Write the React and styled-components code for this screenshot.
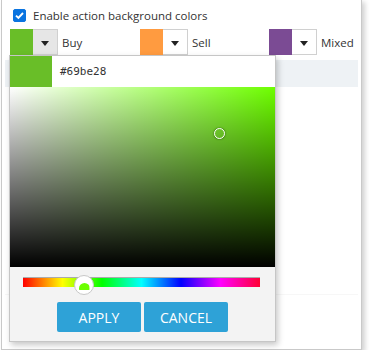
import React, { useState } from 'react';
import styled, { createGlobalStyle } from 'styled-components';

const pickers = [
  { label: 'Buy', color: '#69be28', active: true },
  { label: 'Sell', color: '#ff9b40' },
  { label: 'Mixed', color: '#7b4b94' },
];

const App = () => {
  const [enabled, setEnabled] = useState(true);

  return (
    <>
      <GlobalStyle />
      <Panel>
        <CheckRow onClick={() => setEnabled(!enabled)}>
          <CheckBox checked={enabled}>
            {enabled && (
              <svg width="11" height="11" viewBox="0 0 11 11">
                <path d="M2 5.6 L4.4 8 L9 3" fill="none" stroke="#fff" strokeWidth="1.9" />
              </svg>
            )}
          </CheckBox>
          Enable action background colors
        </CheckRow>

        <PickerRow>
          {pickers.map((p) => (
            <PickerCell key={p.label}>
              <Picker>
                <Swatch color={p.color} />
                <ArrowButton active={p.active}>
                  <Arrow />
                </ArrowButton>
              </Picker>
              <Label>{p.label}</Label>
            </PickerCell>
          ))}
        </PickerRow>

        <Band />
        <Body />

        <Popup>
          <PopupHeader>
            <BigSwatch color="#69be28" />
            <HexValue>#69be28</HexValue>
          </PopupHeader>
          <Gradient>
            <GradHandle style={{ left: 209, top: 46 }} />
          </Gradient>
          <SliderWrap>
            <HueTrack>
              <HueHandle style={{ left: 61 }}>
                <HueDot />
              </HueHandle>
            </HueTrack>
          </SliderWrap>
          <Buttons>
            <Button>APPLY</Button>
            <Button>CANCEL</Button>
          </Buttons>
        </Popup>
      </Panel>
    </>
  );
};

const GlobalStyle = createGlobalStyle`
  body {
    margin: 0;
    background: #ffffff;
    font-family: "Segoe UI", "Open Sans", "Noto Sans", sans-serif;
    color: #333;
  }
`;

const Panel = styled.div`
  position: relative;
  box-sizing: border-box;
  margin: -1px 0 0 1px;
  width: 361px;
  height: 351px;
  border: 1px solid #c9c9c9;
  background: #fff;
  box-shadow: 3px 3px 5px rgba(0, 0, 0, 0.18);
`;

const CheckRow = styled.div`
  display: flex;
  align-items: center;
  gap: 7px;
  height: 14px;
  padding: 8px 0 0 11px;
  font-size: 11.5px;
  color: #333;
  cursor: pointer;
`;

const CheckBox = styled.span`
  display: flex;
  align-items: center;
  justify-content: center;
  box-sizing: border-box;
  width: 13px;
  height: 13px;
  border-radius: 2px;
  background: ${(p) => (p.checked ? '#0a74e0' : '#fff')};
  border: 1px solid ${(p) => (p.checked ? '#0a74e0' : '#777')};
`;

const PickerRow = styled.div`
  display: grid;
  grid-template-columns: 130px 129px 1fr;
  padding: 7px 0 0 8px;
`;

const PickerCell = styled.div`
  display: flex;
  align-items: center;
  gap: 4px;
`;

const Picker = styled.div`
  display: flex;
  box-sizing: border-box;
  height: 26px;
  border: 1px solid #d0d0d0;
`;

const Swatch = styled.div`
  width: 23px;
  margin: -1px 0 -1px -1px;
  background: ${(p) => p.color};
`;

const ArrowButton = styled.div`
  display: flex;
  align-items: center;
  justify-content: center;
  width: 24px;
  background: ${(p) => (p.active ? '#e6e6e6' : '#fff')};
`;

const Arrow = styled.span`
  margin-top: 3px;
  width: 0;
  height: 0;
  border-left: 4px solid transparent;
  border-right: 4px solid transparent;
  border-top: 5px solid #222;
`;

const Label = styled.span`
  font-size: 11.5px;
  color: #333;
`;

const Band = styled.div`
  height: 27px;
  margin: 5px 3px 0 3px;
  background: #eef2f5;
`;

const Body = styled.div`
  height: 207px;
  margin: 0 3px;
  border-bottom: 1px solid #f7f7f7;
`;

const Popup = styled.div`
  position: absolute;
  left: 7px;
  top: 55px;
  box-sizing: border-box;
  width: 267px;
  height: 287px;
  border: 1px solid #c6c6c6;
  background: #f3f3f3;
  box-shadow: 2px 3px 6px rgba(0, 0, 0, 0.22);
  display: flex;
  flex-direction: column;
`;

const PopupHeader = styled.div`
  display: flex;
  align-items: center;
  height: 31px;
  background: #fff;
`;

const BigSwatch = styled.div`
  align-self: stretch;
  width: 42px;
  background: ${(p) => p.color};
`;

const HexValue = styled.span`
  margin-left: 8px;
  font-family: "DejaVu Sans Mono", "Liberation Mono", monospace;
  font-size: 11px;
  color: #333;
`;

const Gradient = styled.div`
  position: relative;
  height: 180px;
  background:
    linear-gradient(to bottom, rgba(0, 0, 0, 0), #000),
    linear-gradient(to right, #fff, rgba(255, 255, 255, 0)),
    hsl(94, 100%, 50%);
`;

const GradHandle = styled.span`
  position: absolute;
  box-sizing: border-box;
  width: 11px;
  height: 11px;
  margin: -5px 0 0 -5px;
  border: 1.5px solid #fff;
  border-radius: 50%;
  box-shadow: 0 0 2px rgba(0, 0, 0, 0.6);
`;

const SliderWrap = styled.div`
  padding: 10px 15px 0 13px;
`;

const HueTrack = styled.div`
  position: relative;
  height: 9px;
  border-top: 1px solid #aaa;
  background: linear-gradient(
    to right,
    #ff0000,
    #ffff00,
    #00ff00,
    #00ffff,
    #0000ff,
    #ff00ff,
    #ff0033
  );
`;

const HueHandle = styled.span`
  position: absolute;
  top: -3px;
  box-sizing: border-box;
  width: 20px;
  height: 20px;
  margin-left: -10px;
  border: 1px solid #c8c8c8;
  border-radius: 50%;
  background: #fff;
  overflow: hidden;
  display: flex;
  justify-content: center;
`;

const HueDot = styled.span`
  margin-top: 7px;
  width: 11px;
  height: 11px;
  border-radius: 50%;
  background: #6cff00;
  clip-path: inset(0 0 4px 0);
`;

const Buttons = styled.div`
  display: flex;
  justify-content: center;
  gap: 3px;
  margin-top: 15px;
`;

const Button = styled.button`
  width: 84px;
  height: 30px;
  border: none;
  border-radius: 2px;
  background: #2ea2d7;
  color: #fff;
  font-family: "Segoe UI", "Open Sans", "Noto Sans", sans-serif;
  font-size: 14px;
  cursor: pointer;
`;

export default App;
